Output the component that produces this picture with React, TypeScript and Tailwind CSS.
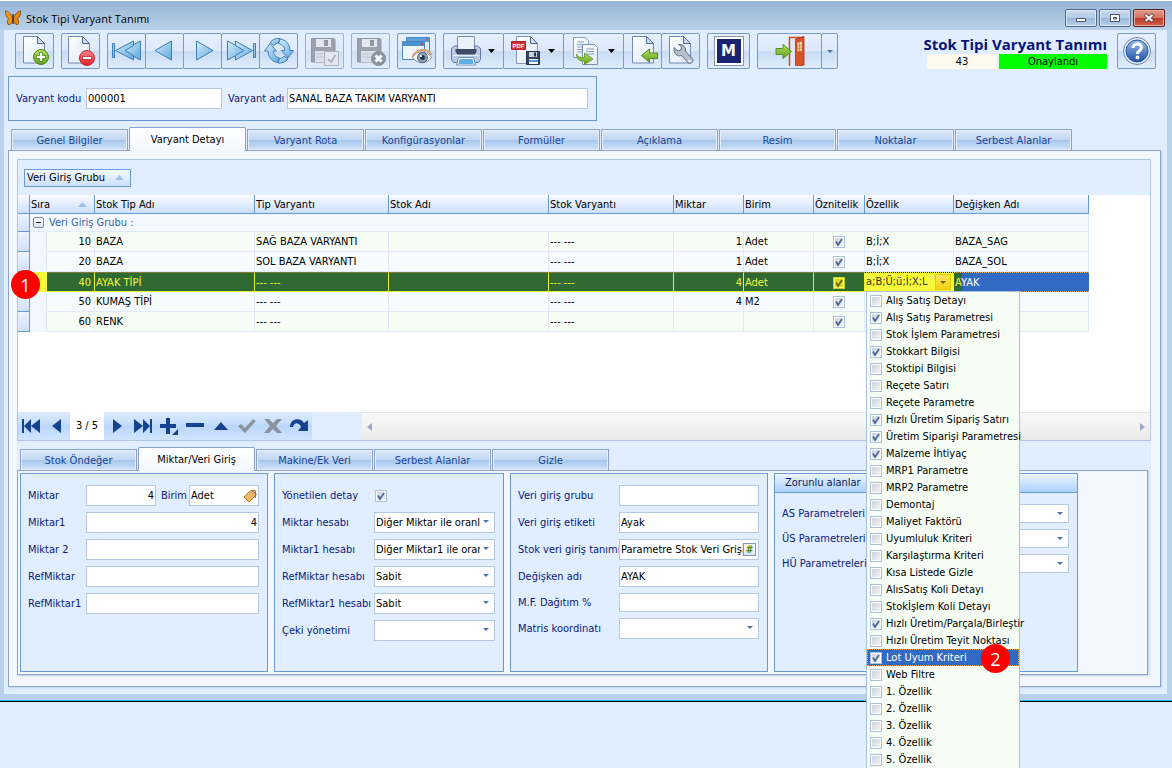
import type { ReactNode } from 'react'

const mainTabs = [
  'Genel Bilgiler',
  'Varyant Detayı',
  'Varyant Rota',
  'Konfigürasyonlar',
  'Formüller',
  'Açıklama',
  'Resim',
  'Noktalar',
  'Serbest Alanlar',
]

const detailTabs = ['Stok Öndeğer', 'Miktar/Veri Giriş', 'Makine/Ek Veri', 'Serbest Alanlar', 'Gizle']

const rows = [
  { sira: 10, tip: 'BAZA', varyant: 'SAĞ BAZA VARYANTI', miktar: '1', birim: 'Adet', ozellik: 'B;İ;X', degisken: 'BAZA_SAG' },
  { sira: 20, tip: 'BAZA', varyant: 'SOL BAZA VARYANTI', miktar: '1', birim: 'Adet', ozellik: 'B;İ;X', degisken: 'BAZA_SOL' },
  { sira: 40, tip: 'AYAK TİPİ', varyant: '--- ---', miktar: '4', birim: 'Adet', ozellik: 'a;B;Ü;ü;İ;X;L', degisken: 'AYAK' },
  { sira: 50, tip: 'KUMAŞ TİPİ', varyant: '--- ---', miktar: '4', birim: 'M2', ozellik: '', degisken: '' },
  { sira: 60, tip: 'RENK', varyant: '--- ---', miktar: '', birim: '', ozellik: '', degisken: '' },
]

const options = [
  { label: 'Alış Satış Detayı', on: false },
  { label: 'Alış Satış Parametresi', on: true },
  { label: 'Stok İşlem Parametresi', on: false },
  { label: 'Stokkart Bilgisi', on: true },
  { label: 'Stoktipi Bilgisi', on: false },
  { label: 'Reçete Satırı', on: false },
  { label: 'Reçete Parametre', on: false },
  { label: 'Hızlı Üretim Sipariş Satırı', on: true },
  { label: 'Üretim Siparişi Parametresi', on: true },
  { label: 'Malzeme İhtiyaç', on: true },
  { label: 'MRP1 Parametre', on: false },
  { label: 'MRP2 Parametre', on: false },
  { label: 'Demontaj', on: false },
  { label: 'Maliyet Faktörü', on: false },
  { label: 'Uyumluluk Kriteri', on: false },
  { label: 'Karşılaştırma Kriteri', on: false },
  { label: 'Kısa Listede Gizle', on: false },
  { label: 'AlısSatış Koli Detayı', on: false },
  { label: 'Stokİşlem Koli Detayı', on: false },
  { label: 'Hızlı Üretim/Parçala/Birleştir', on: true },
  { label: 'Hızlı Üretim Teyit Noktası', on: false },
  { label: 'Lot Uyum Kriteri', on: true, selected: true },
  { label: 'Web Filtre', on: false },
  { label: '1. Özellik', on: false },
  { label: '2. Özellik', on: false },
  { label: '3. Özellik', on: false },
  { label: '4. Özellik', on: false },
  { label: '5. Özellik', on: false },
]

/* ---------- Small controls ---------- */

function Check({ id, label, checked, yellow }: { id?: string; label?: string; checked: boolean; yellow?: boolean }) {
  return (
    <span className="relative inline-grid size-3 shrink-0 align-middle">
      <input
        type="checkbox"
        id={id}
        aria-label={label}
        defaultChecked={checked}
        className={`peer col-start-1 row-start-1 size-3 appearance-none border ${
          yellow
            ? 'border-[#b9cf3c] bg-[#dcd820] shadow-[inset_0_0_0_1px_#fdfd60]'
            : 'border-[#a9c0e2] bg-gradient-to-br from-[#c9ced8] to-[#f6f6f8] shadow-[inset_0_0_0_1px_#ffffff]'
        }`}
      />
      <svg viewBox="0 0 12 12" className="pointer-events-none invisible col-start-1 row-start-1 size-3 peer-checked:visible">
        <path d="M3 5.5 5 9 9 3" fill="none" stroke={yellow ? '#6b6a10' : '#4a6a9c'} strokeWidth="1.8" />
      </svg>
    </span>
  )
}

function Arrow({ className }: { className: string }) {
  return (
    <svg viewBox="0 0 8 4" preserveAspectRatio="none" className={`shrink-0 ${className}`} fill="currentColor">
      <path d="M0 0h8L4 4z" />
    </svg>
  )
}

function Label({ htmlFor, children }: { htmlFor: string; children: ReactNode }) {
  return (
    <label htmlFor={htmlFor} className="self-center text-[#0a1a7a]">
      {children}
    </label>
  )
}

const fieldClass = 'h-[21px] w-full min-w-0 border border-[#b4c8e4] bg-white px-px text-black outline-none'

function TextField({ id, value = '', right }: { id: string; value?: string; right?: boolean }) {
  return <input id={id} type="text" defaultValue={value} className={`${fieldClass} ${right ? 'text-right' : ''}`} />
}

function SelectField({ id, value = '', low }: { id: string; value?: string; low?: boolean }) {
  return (
    <div className="relative">
      <select
        id={id}
        className={`w-full appearance-none border border-[#b4c8e4] bg-white pr-[14px] pl-px text-black outline-none ${low ? 'h-[19px]' : 'h-[21px]'}`}
      >
        <option>{value}</option>
      </select>
      <Arrow className="pointer-events-none absolute top-2 right-[6px] h-[3px] w-[6px] text-[#4c74ae]" />
    </div>
  )
}

function Tabs({ items, active }: { items: string[]; active: number }) {
  return (
    <div role="tablist" className="flex h-[23px] items-end gap-px">
      {items.map((item, i) =>
        i === active ? (
          <button
            key={item}
            role="tab"
            aria-selected="true"
            className="relative z-10 -mb-px h-6 w-[117px] rounded-t-[2px] border border-b-0 border-[#8ba2cb] bg-gradient-to-b from-white to-[#f3f8ff] pt-px text-black"
          >
            {item}
          </button>
        ) : (
          <button
            key={item}
            role="tab"
            aria-selected="false"
            className="h-[21px] w-[117px] border border-b-0 border-[#8ba2cb] bg-[linear-gradient(#dfe9f8_0%,#c0d6f2_48%,#a9c8ee_52%,#cfe2f8_100%)] pt-[2px] text-[#1a4596] shadow-[inset_0_0_0_1px_#e6effb]"
          >
            {item}
          </button>
        ),
      )}
    </div>
  )
}

function Callout({ n, className }: { n: number; className: string }) {
  return (
    <span
      className={`absolute z-30 flex size-[29px] items-center justify-center rounded-full bg-[#fe0000] font-['Open_Sans',sans-serif] text-[18px] text-white ${className}`}
    >
      {n}
    </span>
  )
}

/* ---------- Toolbar icons ---------- */

function Icon({ children }: { children: ReactNode }) {
  return (
    <svg viewBox="0 0 30 30" className="size-[30px] shrink-0">
      {children}
    </svg>
  )
}

function Defs() {
  return (
    <svg className="absolute size-0" aria-hidden="true">
      <defs>
        <linearGradient id="blue" x1="0" y1="0" x2="1" y2="1">
          <stop offset="0" stopColor="#d6eefb" />
          <stop offset="1" stopColor="#5fa9dd" />
        </linearGradient>
        <linearGradient id="page" x1="0" y1="0" x2="1" y2="1">
          <stop offset="0" stopColor="#ffffff" />
          <stop offset="1" stopColor="#dde9f8" />
        </linearGradient>
        <linearGradient id="green" x1="0" y1="0" x2="0" y2="1">
          <stop offset="0" stopColor="#b4e05c" />
          <stop offset="1" stopColor="#5fa01c" />
        </linearGradient>
        <linearGradient id="red" x1="0" y1="0" x2="0" y2="1">
          <stop offset="0" stopColor="#ff8a8a" />
          <stop offset="1" stopColor="#e01a24" />
        </linearGradient>
        <linearGradient id="help" x1="0" y1="0" x2="0" y2="1">
          <stop offset="0" stopColor="#9dbde8" />
          <stop offset="1" stopColor="#1c53a8" />
        </linearGradient>
      </defs>
    </svg>
  )
}

function Page({ x = 3 }: { x?: number }) {
  return (
    <g transform={`translate(${x} 0)`}>
      <path d="M.5.5h14l7 7v19.500H.5z" fill="url(#page)" stroke="#7488b4" />
      <path d="M14.500.5v7h7z" fill="#c9dcf2" stroke="#54688f" strokeWidth="1" />
    </g>
  )
}

function Floppy() {
  return (
    <>
      <path d="M1.500 2.500h22.500l1 1v22.500H1.500z" fill="#7f838b" stroke="#6c7079" />
      <path d="M6 3h15v8H6z" fill="#e4e6ea" />
      <path d="M14 4h4v6h-4z" fill="#6f747e" />
      <path d="M5 15h16v11H5z" fill="#d7dade" />
      <path d="M6 18h14M6 21h14" stroke="#b6bac1" />
    </>
  )
}

const AddIcon = () => (
  <Icon>
    <Page />
    <circle cx="21" cy="21" r="7.500" fill="url(#green)" stroke="#4d8412" />
    <path d="M19.500 16.500h3v3h3v3h-3v3h-3v-3h-3v-3h3z" fill="#fff" stroke="#4d8412" strokeWidth=".8" />
  </Icon>
)

const RemoveIcon = () => (
  <Icon>
    <Page x={2} />
    <circle cx="21" cy="22" r="7.500" fill="url(#red)" stroke="#c02a30" />
    <path d="M16.500 20.500h9v3h-9z" fill="#fff" stroke="#b01820" strokeWidth=".7" />
  </Icon>
)

const FirstIcon = () => (
  <Icon>
    <g fill="url(#blue)" stroke="#3f7dba">
      <path d="M.5 7.500h2v14h-2z" />
      <path d="M10.500 14.500 28.500 5v19z" />
      <path d="M3.500 14.500 21.500 5v4.500L13 14.500l8.500 5V24z" />
    </g>
  </Icon>
)

const LastIcon = () => (
  <Icon>
    <g fill="url(#blue)" stroke="#3f7dba">
      <path d="M19.500 14.500 1.500 5v19z" />
      <path d="M26.500 14.500 9.500 5v4.500l8.500 5-8.500 5V24z" />
      <path d="M27.500 7.500h2v14h-2z" />
    </g>
  </Icon>
)

const PrevIcon = () => (
  <Icon>
    <path d="M5 14.500 21.500 5v19z" fill="url(#blue)" stroke="#3f7dba" />
  </Icon>
)

const NextIcon = () => (
  <Icon>
    <path d="M25 14.500 8.500 5v19z" fill="url(#blue)" stroke="#3f7dba" />
  </Icon>
)

const RefreshIcon = () => (
  <Icon>
    <g fill="url(#blue)" stroke="#3a78b8" strokeWidth=".9">
      <path d="M.5 15 6 7.500l6.500 7.500H9.500c0 3.500 2 6 6 7l-1.500 4.500C8 26 4 21 4 15z" />
      <path d="M29.500 14.500 24 22l-6.500-7.500h3c0-3.500-2-6-6-7L16 3c6 .5 10 5.500 10 11.500z" />
      <path d="M6 6.500C8.500 3.500 12 2 16 2.500L14.500 7c-2 0-3.500 1-4.500 2.500z" />
      <path d="M24 23c-2.500 3-6 4.500-10 4l1.500-4.500c2 0 3.500-1 4.500-2.500z" />
    </g>
  </Icon>
)

const SaveIcon = () => (
  <Icon>
    <Floppy />
    <path d="M14.500 15.500h14v14h-14z" fill="#e3e5e9" stroke="#9599a1" />
    <path d="M18 23l3 3 4.500-7" fill="none" stroke="#8b8f98" strokeWidth="1.500" />
  </Icon>
)

const SaveCancelIcon = () => (
  <Icon>
    <Floppy />
    <circle cx="22.500" cy="22.500" r="7" fill="#6c717b" stroke="#5d626c" />
    <path d="M19.500 19.500l6 6m0-6l-6 6" stroke="#fff" strokeWidth="3" />
  </Icon>
)

const PreviewIcon = () => (
  <Icon>
    <path d="M4.500 1.500h23v17h-23z" fill="#dcecf9" stroke="#4f86bf" />
    <path d="M5 2h22v4H5z" fill="#5ba0d8" />
    <path d="M.5 5.500h22v18H.5z" fill="#eef6fd" stroke="#4f86bf" />
    <path d="M1 6h21v4H1z" fill="#4c93d2" />
    <path d="M19 7h2v2h-2zM24 3h2v1.500h-2z" fill="#e2403c" />
    <path d="M10.500 21.500c4-7 14-8 19 0-5 7-14 7-19 0z" fill="#fff" stroke="#8a8f98" />
    <path d="M10.500 21c3-8 15-10 19-2" fill="none" stroke="#d1a076" strokeWidth="2" />
    <circle cx="20.500" cy="21.500" r="5" fill="#8fa3bd" stroke="#4b607e" />
    <circle cx="20.500" cy="21.500" r="2.500" fill="#26364f" />
    <circle cx="19" cy="20" r="1" fill="#fff" />
  </Icon>
)

const PrintIcon = () => (
  <Icon>
    <path d="M6.500.5h17V15h-17z" fill="url(#page)" stroke="#7c90b6" />
    <path d="M.5 12.500l3-2.500h3v4h17v-4h3l3 2.500v11l-2 3h-25l-2-3z" fill="#bccbe4" stroke="#6078a6" />
    <path d="M4.500 13h21v3l-2 2.500h-17l-2-2.500z" fill="#3f4c68" />
    <path d="M7 1h16v12H7z" fill="#eaf1fa" />
    <path d="M2 19.500h26" stroke="#e9f1fb" />
    <path d="M7.500 21.500h15l2 7.500h-19z" fill="#fff" stroke="#6b8fc0" />
    <path d="M8.500 23h13l1 5h-15z" fill="#5ab0e6" />
  </Icon>
)

const PdfIcon = () => (
  <Icon>
    <path d="M5.500.5h14l7 7v20h-21z" fill="url(#page)" stroke="#8394ba" />
    <path d="M19.500.5v7h7z" fill="#c9dcf2" stroke="#54688f" />
    <path d="M.5 5.500h14v8H.5z" fill="#d32f36" stroke="#b21f28" />
    <text x="1.500" y="12" fontSize="6" fontWeight="bold" fill="#fff" fontFamily="Liberation Sans, sans-serif">
      PDF
    </text>
    <path d="M15.500 15.500h13v13h-13z" fill="#38455c" stroke="#27334a" />
    <path d="M18 16h8v5h-8z" fill="#c9d4e2" />
    <path d="M23 16.500h2v4h-2z" fill="#27334a" />
    <path d="M18 23h9v5h-9z" fill="#fff" />
    <path d="M18 24h9v2h-9z" fill="#4aa0e0" />
  </Icon>
)

const CopyIcon = () => (
  <Icon>
    <path d="M2.500 1.500h12l3 3v17h-15z" fill="url(#page)" stroke="#8c9ec4" />
    <path d="M6 6h7M6 8.500h7M6 11h7M6 13.500h7M6 16h7" stroke="#8aa0c8" />
    <path d="M11.500 8.500h12l3 3v17h-15z" fill="url(#page)" stroke="#7c90ba" />
    <path d="M15 13h8M15 15.500h8M15 18h8" stroke="#8aa0c8" />
    <path d="M5.500 18c1 3 4 4 8 3.500V17l8.500 6-8.500 5.500V25c-5 .5-8-2-8-7z" fill="url(#green)" stroke="#5e8f1c" strokeWidth=".8" />
  </Icon>
)

const ImportIcon = () => (
  <Icon>
    <Page x={4} />
    <path d="M13.500 19.500l8-6.500v4h8v5.500h-8v4z" fill="url(#green)" stroke="#4d8a28" />
  </Icon>
)

const WrenchIcon = () => (
  <Icon>
    <Page x={3} />
    <path
      d="M8 11.500l4 3.500 3-1 .5-3.500-3-2c4-.5 7.500 2 7 6.500l7 8c1.500 2-1.500 5.500-4 4l-7-7.500c-4 1.500-8-1.500-7.500-8z"
      fill="#b6bfce"
      stroke="#5d6c88"
    />
    <circle cx="23.500" cy="25" r="1.200" fill="#fff" />
  </Icon>
)

const DoorIcon = () => (
  <Icon>
    <path d="M14.500 30V1.500h14" fill="none" stroke="#d8491f" strokeWidth="1.500" />
    <path d="M16 3h11v25H16z" fill="#dfe9f6" />
    <path d="M20.500 3l8.500-2.500v28.500l-8.500 2z" fill="#d9532a" stroke="#a83412" strokeWidth=".8" />
    <path d="M22.500 6.500l4.500-1v9l-4.500 1z" fill="#f6dca6" />
    <path d="M24.500 6v9M22.500 10l4.500-.5M22.500 12.500l4.500-.5" stroke="#b9723c" strokeWidth=".7" />
    <path d="M1 12.500h7v-4l8.500 7-8.500 7v-4H1z" fill="url(#green)" stroke="#4f9428" />
  </Icon>
)

const HelpIcon = () => (
  <Icon>
    <circle cx="15" cy="15" r="13.500" fill="#e7eef8" stroke="#6a83b4" />
    <circle cx="15" cy="15" r="11" fill="url(#help)" stroke="#2a5298" />
    <path d="M11 12c0-5 8.500-5.500 8.500-.5 0 3-4 3-4 6.500" fill="none" stroke="#fff" strokeWidth="3" />
    <circle cx="15.500" cy="21.500" r="1.900" fill="#fff" />
  </Icon>
)

const toolSurface =
  'h-9 shrink-0 rounded-[2px] border border-[#7b98c6] bg-[linear-gradient(#e6f0fd_0%,#dce9fa_48%,#c9dcf4_52%,#dfecfc_100%)]'

function Tool({ label, children, disabled }: { label: string; children: ReactNode; disabled?: boolean }) {
  return (
    <button
      aria-label={label}
      disabled={disabled}
      className={`flex w-[39px] items-center justify-center ${toolSurface} ${disabled ? 'opacity-70' : ''}`}
    >
      {children}
    </button>
  )
}

function MenuTool({ label, children }: { label: string; children: ReactNode }) {
  return (
    <button aria-label={label} className={`flex w-[61px] items-center gap-[7px] pl-[7px] ${toolSurface}`}>
      {children}
      <Arrow className="h-1 w-[7px] text-black" />
    </button>
  )
}

/* ---------- Page sections ---------- */

function TitleBar() {
  const winButton =
    'flex h-[18px] w-8 items-center justify-center rounded-[2px] border border-[#56698c] bg-[linear-gradient(#c9dbef_0%,#b4cbe6_48%,#9ab7da_52%,#b7d0ec_100%)] shadow-[inset_0_0_0_1px_#dbe8f6]'
  return (
    <header className="flex h-[30px] items-center border-t border-white bg-gradient-to-b from-[#98b4d3] to-[#b9d1ea] pt-[5px] pr-[7px] pl-[5px]">
      <svg viewBox="0 0 16 16" className="size-4">
        <path d="M7.500 8C6 4 3 1 .5 1c0 4 1 7 3.500 7.500C2 10 2 14 4 15c2-1 3.500-3 3.500-5z" fill="#f39a1c" stroke="#7a3e08" strokeWidth=".8" />
        <path d="M8.500 8C10 4 13 1 15.500 1c0 4-1 7-3.500 7.500 2 1.500 2 5.500 0 6.500-2-1-3.500-3-3.500-5z" fill="#e8860f" stroke="#7a3e08" strokeWidth=".8" />
        <path d="M8 4v10" stroke="#3f2408" strokeWidth="1.300" />
      </svg>
      <h1 className="ml-[5px] pt-[2px] font-['Open_Sans',sans-serif] text-[11px] text-black">Stok Tipi Varyant Tanımı</h1>
      <div className="ml-auto flex gap-[2px]">
        <button aria-label="Simge durumuna küçült" className={winButton}>
          <svg viewBox="0 0 12 10" className="h-[10px] w-3">
            <path d="M1.500 5.500h9v3h-9z" fill="#fff" stroke="#4b5565" />
          </svg>
        </button>
        <button aria-label="Ekranı kapla" className={winButton}>
          <svg viewBox="0 0 12 10" className="h-[10px] w-3">
            <path d="M1.500 1.500h9v7h-9z" fill="#fff" stroke="#4b5565" />
            <path d="M4.500 4.500h3v1.500h-3z" fill="#9ab7da" stroke="#4b5565" />
          </svg>
        </button>
        <button
          aria-label="Kapat"
          className="flex h-[18px] w-8 items-center justify-center rounded-[2px] border border-[#5a1f1c] bg-[linear-gradient(#e29c8e_0%,#d4705f_48%,#bd3a26_52%,#d1604a_100%)] shadow-[inset_0_0_0_1px_#e8b0a4]"
        >
          <svg viewBox="0 0 12 10" className="h-[10px] w-3">
            <path d="M2 1.500l8 7m0-7l-8 7" stroke="#5b3a3c" strokeWidth="3.600" />
            <path d="M2.500 2l7 6m0-6l-7 6" stroke="#fff" strokeWidth="2" />
          </svg>
        </button>
      </div>
    </header>
  )
}

function Toolbar() {
  return (
    <div className="flex items-start gap-[7px] px-[11px] pt-[3px]">
      <Tool label="Yeni"><AddIcon /></Tool>
      <Tool label="Sil"><RemoveIcon /></Tool>
      <div className="flex -space-x-px">
        <Tool label="İlk kayıt"><FirstIcon /></Tool>
        <Tool label="Önceki kayıt"><PrevIcon /></Tool>
        <Tool label="Sonraki kayıt"><NextIcon /></Tool>
        <Tool label="Son kayıt"><LastIcon /></Tool>
        <Tool label="Yenile"><RefreshIcon /></Tool>
      </div>
      <Tool label="Kaydet" disabled><SaveIcon /></Tool>
      <Tool label="Vazgeç" disabled><SaveCancelIcon /></Tool>
      <Tool label="Önizle"><PreviewIcon /></Tool>
      <div className="flex -space-x-px">
        <MenuTool label="Yazdır"><PrintIcon /></MenuTool>
        <MenuTool label="PDF kaydet"><PdfIcon /></MenuTool>
        <MenuTool label="Kopyala"><CopyIcon /></MenuTool>
        <Tool label="İçeri al"><ImportIcon /></Tool>
        <Tool label="Ayarlar"><WrenchIcon /></Tool>
      </div>
      <button aria-label="M" className={`flex w-[43px] items-center justify-center ${toolSurface}`}>
        <span className="flex size-[30px] items-center justify-center border border-[#8d96a8] bg-white">
          <span className="flex size-6 items-center justify-center bg-[#1a2370] font-['DejaVu_Sans',sans-serif] text-[15px] font-bold text-white">
            M
          </span>
        </span>
      </button>
      <div className="flex -space-x-px">
        <button aria-label="Çıkış" className={`flex w-[65px] items-center justify-center ${toolSurface}`}>
          <DoorIcon />
        </button>
        <button aria-label="Çıkış seçenekleri" className={`flex w-[17px] items-center justify-center ${toolSurface}`}>
          <Arrow className="h-[3px] w-[6px] text-[#4c74ae]" />
        </button>
      </div>

      <div className="ml-auto flex items-start gap-[10px]">
        <div className="flex flex-col items-end">
          <h2 className="h-[21px] font-['Open_Sans',sans-serif] text-[15px] leading-[22px] font-bold text-[#0a1478]">
            Stok Tipi Varyant Tanımı
          </h2>
          <div className="flex gap-[2px] text-center leading-[16px] text-black">
            <span className="h-[15px] w-[70px] bg-[#fffaf0]">43</span>
            <span className="h-[15px] w-[108px] bg-[#00ff00]">Onaylandı</span>
          </div>
        </div>
        <Tool label="Yardım"><HelpIcon /></Tool>
      </div>
    </div>
  )
}

function PropertyMenu() {
  return (
    <ul className="absolute top-[18px] left-px z-20 w-[154px] border border-[#aac0e0] bg-[#f5fdf5] text-black">
      {options.map((o, i) => (
        <li
          key={o.label}
          className={
            o.selected
              ? 'relative flex h-[17px] items-center gap-1 border border-dotted border-[#f0a030] bg-[#316ac5] pl-[2px] text-white'
              : 'flex h-[17px] items-center gap-1 pl-[3px]'
          }
        >
          <Check id={`ozellik-${i}`} checked={o.on} />
          <label htmlFor={`ozellik-${i}`}>{o.label}</label>
          {o.selected && <Callout n={2} className="-top-[6px] left-[113px]" />}
        </li>
      ))}
    </ul>
  )
}

function GutterCell() {
  return <td className="border-r border-b border-[#6a9ad4] bg-gradient-to-b from-[#edf4fe] to-[#cfe1fa] p-0" />
}

function Grid() {
  const head =
    'h-[19px] border-r border-b border-[#6a9ad4] bg-gradient-to-b from-[#fafcff] to-[#cbdffb] px-px pt-px pb-0 text-left font-normal'
  return (
    <table className="w-[1071px] table-fixed border-separate border-spacing-0 text-black">
      <colgroup>
        <col className="w-3" />
        <col className="w-[17px]" />
        <col className="w-12" />
        <col className="w-[160px]" />
        <col className="w-[134px]" />
        <col className="w-[160px]" />
        <col className="w-[125px]" />
        <col className="w-[70px]" />
        <col className="w-[70px]" />
        <col className="w-[51px]" />
        <col className="w-[89px]" />
        <col className="w-[135px]" />
      </colgroup>
      <thead>
        <tr>
          <th className={head} />
          <th className={head} colSpan={2}>
            <span className="flex items-center justify-between pr-[6px]">
              Sıra
              <Arrow className="h-[5px] w-[9px] rotate-180 text-[#9cc2f2]" />
            </span>
          </th>
          <th className={head}>Stok Tip Adı</th>
          <th className={head}>Tip Varyantı</th>
          <th className={head}>Stok Adı</th>
          <th className={head}>Stok Varyantı</th>
          <th className={head}>Miktar</th>
          <th className={head}>Birim</th>
          <th className={head}>Öznitelik</th>
          <th className={head}>Özellik</th>
          <th className={head}>Değişken Adı</th>
        </tr>
      </thead>
      <tbody>
        <tr>
          <GutterCell />
          <td colSpan={11} className="h-[18px] border-r border-b border-[#dfeafb] bg-[#f3f8ff] py-0 pr-0 pl-[3px]">
            <span className="flex items-center gap-[5px] text-[#3764a8]">
              <button
                aria-label="Grubu daralt"
                className="flex size-[11px] items-center justify-center rounded-[2px] border border-[#7d90ac] bg-gradient-to-b from-white to-[#d4dff0]"
              >
                <span className="h-px w-[5px] bg-[#222]" />
              </button>
              <span className="pt-px">Veri Giriş Grubu :</span>
            </span>
          </td>
        </tr>
        {rows.map((r, i) => {
          const sel = r.sira === 40
          const cell = sel
            ? 'h-5 border-t border-r border-b border-t-[#7d7a3c] border-r-[#e8ee30] border-b-[#e8ee30] bg-[#306a33] pt-px pb-0 text-[#f4f43c]'
            : `h-5 border-r border-b border-[#dfeafb] pt-px pb-0 ${i % 2 ? 'bg-[#f6fbff]' : 'bg-[#f5fdf5]'}`
          return (
            <tr key={r.sira}>
              <GutterCell />
              {sel ? (
                <td className="relative bg-[#f7f93a] p-0">
                  <Callout n={1} className="-top-[2px] -left-[19px]" />
                </td>
              ) : (
                <td className="border-r border-[#dfeafb] bg-[#f3f8ff] p-0" />
              )}
              <td className={`pr-[3px] pl-px text-right ${cell}`}>{r.sira}</td>
              <td className={`px-px ${cell}`}>{r.tip}</td>
              <td className={`px-px ${cell}`}>{r.varyant}</td>
              <td className={`px-px ${cell}`} />
              <td className={`px-px ${cell}`}>{'--- ---'}</td>
              <td className={`px-px text-right ${cell}`}>{r.miktar}</td>
              <td className={`px-px ${cell}`}>{r.birim}</td>
              <td className={`px-px text-center leading-none ${cell}`}>
                <Check label={`Öznitelik ${r.sira}`} checked yellow={sel} />
              </td>
              {sel ? (
                <td className="relative border-t border-b border-dotted border-t-black border-b-[#e8ee30] bg-[#f7f93a] p-0">
                  <div className="flex h-[18px] items-center">
                    <input
                      aria-label="Özellik"
                      type="text"
                      defaultValue={r.ozellik}
                      className="w-[70px] bg-transparent px-px text-[#33330a] outline-none"
                    />
                    <button
                      aria-label="Özellik listesini aç"
                      className="flex h-4 w-4 items-center justify-center border border-[#e8c810] bg-gradient-to-b from-[#fbe74a] to-[#f6d40c]"
                    >
                      <Arrow className="h-[3px] w-[6px] text-[#6e6410]" />
                    </button>
                  </div>
                  <PropertyMenu />
                </td>
              ) : (
                <td className={`px-px ${cell}`}>{r.ozellik}</td>
              )}
              {sel ? (
                <td className="border-t border-b border-dotted border-[#e8b060] bg-[linear-gradient(90deg,#306a33_8px,#316ac5_8px)] px-px pt-px pb-0 text-white">
                  <span className="text-[#f4f43c]">A</span>YAK
                </td>
              ) : (
                <td className={`px-px ${cell}`}>{r.degisken}</td>
              )}
            </tr>
          )
        })}
      </tbody>
    </table>
  )
}

function NavButton({ label, children, muted }: { label: string; children: ReactNode; muted?: boolean }) {
  return (
    <button
      aria-label={label}
      className={`flex h-7 w-[26px] items-center justify-center bg-[linear-gradient(#dcebff_0%,#c8dffc_40%,#bad6fb_50%,#d0e4ff_100%)] pr-px ${muted ? 'text-[#8e949e]' : 'text-[#15438f]'}`}
    >
      <svg viewBox="0 0 20 18" className="h-[18px] w-5" fill="currentColor">
        {children}
      </svg>
    </button>
  )
}

function Navigator() {
  return (
    <div className="flex h-7 bg-[#e1eeff]">
      <NavButton label="İlk">
        <path d="M1 2h2v14H1zM3 9l7-7v14zM10 9l9-7v14z" />
      </NavButton>
      <NavButton label="Önceki">
        <path d="M5 9l9-7v14z" />
      </NavButton>
      <span className="flex w-[34px] items-center justify-center bg-white text-black">3 / 5</span>
      <NavButton label="Sonraki">
        <path d="M15 9L6 2v14z" />
      </NavButton>
      <NavButton label="Son">
        <path d="M19 2h-2v14h2zM17 9l-7-7v14zM10 9L1 2v14z" />
      </NavButton>
      <NavButton label="Ekle">
        <path d="M7 1h4v6h6v4h-6v6H7v-6H1V7h6zM19 12v6h-6z" />
      </NavButton>
      <NavButton label="Çıkar">
        <path d="M1 6h18v4H1z" />
      </NavButton>
      <NavButton label="Düzenle">
        <path d="M3 13l7-8 7 8z" />
      </NavButton>
      <NavButton label="Onayla" muted>
        <path d="M1 9l3-2 4 4 8-9 3 2L8 16z" />
      </NavButton>
      <NavButton label="İptal" muted>
        <path d="M1 2h5l4 4 4-4h5l-6 7 6 7h-5l-4-4-4 4H1l6-7z" />
      </NavButton>
      <NavButton label="Tazele">
        <path d="M1 10C1 1 12 0 15 6l4-3v11H9l3-4C10 5 5 5 4 10z" />
      </NavButton>
      <div className="ml-[50px] flex flex-1 items-center justify-between border-t border-[#e4e4e4] bg-gradient-to-b from-[#f8f8f8] to-[#ebebeb] px-[5px] text-[#9aa6c6]">
        <svg viewBox="0 0 5 8" className="h-2 w-[5px]" fill="currentColor">
          <path d="M5 0v8L0 4z" />
        </svg>
        <svg viewBox="0 0 5 8" className="h-2 w-[5px]" fill="currentColor">
          <path d="M0 0v8l5-4z" />
        </svg>
      </div>
    </div>
  )
}

function DetailForms() {
  const box = 'h-[199px] border border-[#6a9ad4] bg-[#e1eeff]'
  return (
    <div className="mr-[3px] flex gap-[6px] border border-[#8ba2cb] bg-[#f3f8ff] p-[2px] shadow-[1px_1px_2px_#c0cfe6]">
      <section className={`${box} w-[248px] px-[7px] pt-[11px]`}>
        <div className="grid grid-cols-[58px_70px_33px_70px] gap-y-[6px]">
          <Label htmlFor="miktar">Miktar</Label>
          <TextField id="miktar" value="4" right />
          <label htmlFor="birim" className="self-center pl-[5px] text-[#0a1a7a]">Birim</label>
          <div className="relative">
            <TextField id="birim" value="Adet" />
            <svg viewBox="0 0 14 14" className="absolute top-1 right-[2px] size-[14px]">
              <path d="M1 8l6-6 5-1 1 5-7 7z" fill="#f2b866" stroke="#b3782e" />
              <path d="M9 2l4 3-1 4" fill="none" stroke="#6a6a72" />
              <circle cx="10" cy="4" r="1.200" fill="#fff" stroke="#8a6230" strokeWidth=".6" />
            </svg>
          </div>
          <Label htmlFor="miktar1">Miktar1</Label>
          <div className="col-span-3"><TextField id="miktar1" value="4" right /></div>
          <Label htmlFor="miktar2">Miktar 2</Label>
          <div className="col-span-3"><TextField id="miktar2" /></div>
          <Label htmlFor="refmiktar">RefMiktar</Label>
          <div className="col-span-3"><TextField id="refmiktar" /></div>
          <Label htmlFor="refmiktar1">RefMiktar1</Label>
          <div className="col-span-3"><TextField id="refmiktar1" /></div>
        </div>
      </section>

      <section className={`${box} w-[230px] px-[7px] pt-[11px]`}>
        <div className="grid auto-rows-[21px] grid-cols-[92px_121px] gap-y-[6px]">
          <Label htmlFor="yonetilen">Yönetilen detay</Label>
          <div className="flex items-center pl-px">
            <Check id="yonetilen" checked />
          </div>
          <Label htmlFor="mhesap">Miktar hesabı</Label>
          <SelectField id="mhesap" value="Diğer Miktar ile oranlı" />
          <Label htmlFor="m1hesap">Miktar1 hesabı</Label>
          <SelectField id="m1hesap" value="Diğer Miktar1 ile oranlı" />
          <Label htmlFor="rhesap">RefMiktar hesabı</Label>
          <SelectField id="rhesap" value="Sabit" />
          <Label htmlFor="r1hesap">RefMiktar1 hesabı</Label>
          <SelectField id="r1hesap" value="Sabit" />
          <Label htmlFor="ceki">Çeki yönetimi</Label>
          <SelectField id="ceki" />
        </div>
      </section>

      <section className={`${box} w-[258px] px-[7px] pt-[11px]`}>
        <div className="grid grid-cols-[101px_140px] gap-y-[6px]">
          <Label htmlFor="vgrup">Veri giriş grubu</Label>
          <TextField id="vgrup" />
          <Label htmlFor="vetiket">Veri giriş etiketi</Label>
          <TextField id="vetiket" value="Ayak" />
          <Label htmlFor="vtanim">Stok veri giriş tanımı</Label>
          <div className="flex h-[21px] items-center border border-[#b4c8e4] bg-white pr-[2px]">
            <input id="vtanim" type="text" defaultValue="Parametre Stok Veri Grişi" className="min-w-0 flex-1 pl-px text-black outline-none" />
            <button
              aria-label="Tanım seç"
              className="size-[13px] border border-[#8296bc] bg-gradient-to-b from-white to-[#dce6f4] text-[10px] leading-[11px] font-bold text-[#4a8a08]"
            >
              #
            </button>
          </div>
          <Label htmlFor="dadi">Değişken adı</Label>
          <TextField id="dadi" value="AYAK" />
          <Label htmlFor="mf">M.F. Dağıtım %</Label>
          <input id="mf" type="text" className="h-[19px] w-full border border-[#b4c8e4] bg-white px-px outline-none" />
          <Label htmlFor="matris">Matris koordinatı</Label>
          <SelectField id="matris" />
        </div>
      </section>

      <section className={`${box} w-[304px]`}>
        <h3 className="h-[19px] border-b border-[#6a9ad4] bg-gradient-to-b from-[#eef5ff] to-[#acd0fc] pl-[10px] leading-[18px] text-[#0a1a5a]">
          Zorunlu alanlar
        </h3>
        <div className="grid grid-cols-[84px_203px] gap-y-[6px] px-[7px] pt-[11px]">
          <Label htmlFor="as">AS Parametreleri</Label>
          <SelectField id="as" low />
          <Label htmlFor="us">ÜS Parametreleri</Label>
          <SelectField id="us" low />
          <Label htmlFor="hu">HÜ Parametreleri</Label>
          <SelectField id="hu" low />
        </div>
      </section>
    </div>
  )
}

export default function App() {
  return (
    <div className="min-h-screen bg-[#e1eeff] font-['DejaVu_Sans_Condensed','DejaVu_Sans',sans-serif] text-[11px] leading-[14px] whitespace-nowrap">
      <Defs />
      <div className="border-b border-black">
        <div className="border-b border-[#1fc4e0]">
          <TitleBar />
          <div className="border-r-[5px] border-b-[6px] border-l-4 border-[#b9d1ea] bg-[#e1eeff] pb-[7px]">
            <Toolbar />

            <div className="mt-[7px] ml-1 flex h-[45px] w-[589px] items-center border border-[#6a9ad4] px-[7px]">
              <label htmlFor="kod" className="w-[70px] text-[#0a1a7a]">Varyant kodu</label>
              <input id="kod" type="text" defaultValue="000001" className={`${fieldClass} max-w-[136px]`} />
              <label htmlFor="adi" className="ml-[6px] w-[59px] shrink-0 text-[#0a1a7a]">Varyant adı</label>
              <input id="adi" type="text" defaultValue="SANAL BAZA TAKIM VARYANTI" className={`${fieldClass} max-w-[301px]`} />
            </div>

            <main className="mt-[6px] mr-[6px] ml-1">
              <div className="pl-[3px]">
                <Tabs items={mainTabs} active={1} />
              </div>
              <div className="border border-[#8ba2cb] bg-[#f3f8ff] pt-2 pr-[9px] pb-[11px] pl-2 shadow-[1px_1px_2px_#c0cfe6]">
                <div className="border border-[#b0c6e4] bg-white">
                  <div className="flex h-[35px] items-center bg-[#e1eeff] pl-[6px]">
                    <button className="flex h-[18px] w-[107px] items-center justify-between border border-[#6a9ad4] bg-gradient-to-b from-[#f6faff] to-[#cbdffb] pr-[6px] pl-[2px] text-black">
                      Veri Giriş Grubu
                      <Arrow className="h-[5px] w-[9px] rotate-180 text-[#9cc2f2]" />
                    </button>
                  </div>
                  <Grid />
                  <div className="h-20" />
                  <Navigator />
                </div>
                <div className="bg-[#e1eeff] pt-[6px]">
                  <div className="pl-[3px]">
                    <Tabs items={detailTabs} active={1} />
                  </div>
                  <DetailForms />
                </div>
              </div>
            </main>
          </div>
        </div>
      </div>
    </div>
  )
}
